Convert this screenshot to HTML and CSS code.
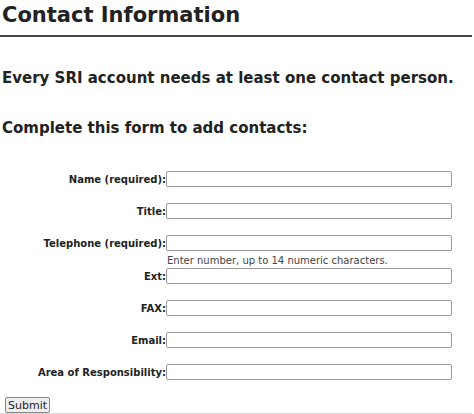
FILE: index.html
```html
<!DOCTYPE html>
<html>
<head>
<meta charset="utf-8">
<link rel="stylesheet" href="styles.css">
</head>
<body>
<div class="page">
  <h1 class="title">Contact Information</h1>
  <h2 class="lead">Every SRI account needs at least one contact person.</h2>
  <h2 class="lead second">Complete this form to add contacts:</h2>
  <form class="form">
    <div class="row"><label class="lbl">Name (required):</label><div class="field"><input class="inp" type="text"></div></div>
    <div class="row"><label class="lbl">Title:</label><div class="field"><input class="inp" type="text"></div></div>
    <div class="row tel"><label class="lbl">Telephone (required):</label><div class="field"><input class="inp" type="text"><div class="hint">Enter number, up to 14 numeric characters.</div></div></div>
    <div class="row"><label class="lbl">Ext:</label><div class="field"><input class="inp" type="text"></div></div>
    <div class="row"><label class="lbl">FAX:</label><div class="field"><input class="inp" type="text"></div></div>
    <div class="row"><label class="lbl">Email:</label><div class="field"><input class="inp" type="text"></div></div>
    <div class="row"><label class="lbl">Area of Responsibility:</label><div class="field"><input class="inp" type="text"></div></div>
    <div class="actions"><button class="btn" type="button">Submit</button></div>
  </form>
</div>
</body>
</html>
```
FILE: styles.css
```css
html, body {
  margin: 0;
  padding: 0;
  background: #fff;
}
body {
  font-family: "DejaVu Sans", Verdana, sans-serif;
  color: #222;
}
.page {
  width: 472px;
  border-bottom: 1px solid #d6d6d6;
}
.title {
  margin: 0;
  padding: 3px 0 7px 2px;
  font-size: 21px;
  line-height: 25px;
  font-weight: bold;
  border-bottom: 2px solid #444;
}
.lead {
  margin: 0;
  padding: 32px 0 0 2px;
  font-size: 15px;
  line-height: 18px;
  font-weight: bold;
}
.lead.second {
  padding-top: 32px;
}
.form {
  margin: 0;
  padding-top: 34px;
}
.row {
  display: flex;
  align-items: flex-start;
  height: 32px;
}
.row.tel {
  height: 33px;
}
.lbl {
  width: 166px;
  text-align: right;
  font-size: 10px;
  font-weight: bold;
  line-height: 16px;
  padding-top: 1px;
}
.field {
  width: 286px;
}
.inp {
  display: block;
  box-sizing: border-box;
  width: 286px;
  height: 16px;
  margin: 0;
  padding: 0 2px;
  border: 1px solid #999;
  border-radius: 2px;
  font-size: 11px;
}
.hint {
  font-size: 10px;
  line-height: 14px;
  color: #444;
  padding-left: 1px;
  padding-top: 3px;
}
.actions {
  padding: 1px 0 0 5px;
}
.btn {
  font-family: "DejaVu Sans", Verdana, sans-serif;
  font-size: 11px;
  line-height: 13px;
  height: 16px;
  padding: 0 2px;
  margin: 0;
  color: #222;
  background: #efefef;
  border: 1px solid #888;
  border-radius: 2px;
  display: block;
}
```
